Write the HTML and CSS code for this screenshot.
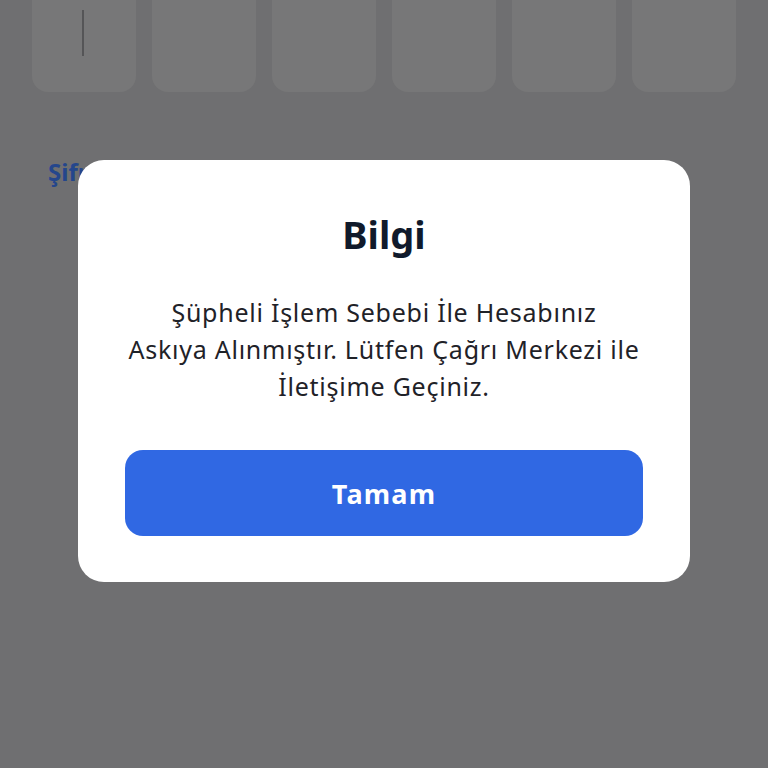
FILE: index.html
```html
<!DOCTYPE html>
<html lang="tr">
<head>
<meta charset="utf-8">
<link rel="stylesheet" href="styles.css">
</head>
<body>
<div class="page">
  <div class="otp">
    <div class="cell"><span class="cursor"></span></div>
    <div class="cell"></div>
    <div class="cell"></div>
    <div class="cell"></div>
    <div class="cell"></div>
    <div class="cell"></div>
  </div>
  <div class="link">Şifremi Unuttum</div>
</div>
<div class="overlay">
  <div class="modal">
    <h1 class="title">Bilgi</h1>
    <p class="msg">Şüpheli İşlem Sebebi İle Hesabınız<br>Askıya Alınmıştır. Lütfen Çağrı Merkezi ile<br>İletişime Geçiniz.</p>
    <button class="btn">Tamam</button>
  </div>
</div>
</body>
</html>
```

FILE: styles.css
```css
html, body {
  margin: 0;
  padding: 0;
  width: 768px;
  height: 768px;
  overflow: hidden;
  background: #6f6f71;
  font-family: "Noto Sans", "Open Sans", sans-serif;
}
.page {
  padding: 0 32px;
}
.otp {
  display: flex;
  gap: 16px;
  margin-top: -20px;
}
.cell {
  width: 104px;
  height: 112px;
  border-radius: 16px;
  background: #777778;
  display: flex;
  align-items: flex-start;
  justify-content: flex-start;
}
.cursor {
  display: block;
  width: 2px;
  height: 46px;
  margin-top: 30px;
  margin-left: 50px;
  background: #555557;
}
.link {
  margin-top: 65px;
  margin-left: 16px;
  color: #24468c;
  font-weight: 700;
  font-size: 24px;
  line-height: 30px;
}
.overlay {
  position: absolute;
  left: 0;
  top: 0;
  width: 768px;
  height: 768px;
}
.modal {
  position: absolute;
  left: 78px;
  top: 160px;
  width: 612px;
  height: 422px;
  box-sizing: border-box;
  background: #ffffff;
  border-radius: 26px;
  padding: 46px 20px 0;
  display: flex;
  flex-direction: column;
  align-items: center;
}
.title {
  margin: 0;
  font-size: 38px;
  line-height: 56px;
  font-weight: 700;
  color: #101a2b;
}
.msg {
  margin: 32px 0 0;
  text-align: center;
  font-size: 25px;
  letter-spacing: 0.75px;
  line-height: 37px;
  color: #1f2228;
  white-space: nowrap;
}
.btn {
  margin-top: 45px;
  width: 518px;
  height: 86px;
  border: none;
  border-radius: 18px;
  background: #3068e3;
  color: #ffffff;
  font-family: "Noto Sans", "Open Sans", sans-serif;
  font-weight: 700;
  font-size: 27px;
  letter-spacing: 1.2px;
}
```
